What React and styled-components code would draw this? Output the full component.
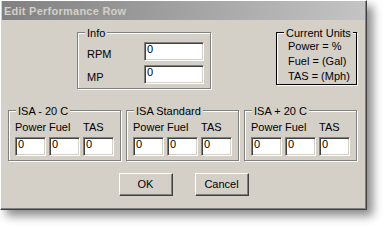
import React from 'react';
import styled, { createGlobalStyle } from 'styled-components';

const Global = createGlobalStyle`
  html, body { margin: 0; padding: 0; background: #ffffff; }
  #root { width: 384px; height: 226px; }
`;

const Window = styled.div`
  width: 367px;
  height: 210px;
  box-sizing: border-box;
  display: flex;
  flex-direction: column;
  background: #d4d0c8;
  border: 1px solid;
  border-color: #ffffff #404040 #404040 #ffffff;
  padding: 0 1px 1px 1px;
  box-shadow: inset -1px -1px 0 #808080, 6px 6px 9px rgba(0, 0, 0, 0.45);
  font-family: "Liberation Sans", Arial, sans-serif;
  font-size: 11px;
  color: #000;
`;

const TitleBar = styled.div`
  height: 19px;
  box-sizing: border-box;
  padding: 1px 0 0 2px;
  line-height: 18px;
  background: linear-gradient(to right, #808080, #c4c4c4);
  color: #d4d0c8;
  font-weight: bold;
  letter-spacing: 0.25px;
  white-space: nowrap;
`;

const Body = styled.div`
  flex: 1;
  display: flex;
  flex-direction: column;
  padding-top: 5px;
`;

const TopRow = styled.div`
  display: flex;
  align-items: flex-start;
  gap: 65px;
  padding-left: 75px;
`;

const Group = styled.fieldset`
  margin: 0;
  padding: 0;
  min-width: 0;
  box-sizing: border-box;
  width: ${(p) => p.$w}px;
  border: 1px solid ${(p) => (p.$dark ? '#000000' : '#808080')};
  box-shadow: 1px 1px 0 #ffffff, inset 1px 1px 0 #ffffff;
`;

const Legend = styled.legend`
  margin-left: 7px;
  padding: 2px 2px 0;
  line-height: 12px;
  background: #d4d0c8;
`;

const InfoGrid = styled.div`
  display: grid;
  grid-template-columns: 1fr 60px;
  row-gap: 4px;
  padding: 3px 6px 4px 9px;
`;

const FieldLabel = styled.span`
  padding-top: 6px;
  line-height: 13px;
`;

const EditBox = styled.input`
  width: ${(p) => p.$w}px;
  height: 19px;
  box-sizing: border-box;
  margin: 0;
  padding: 0 0 6px 2px;
  line-height: 11px;
  font-family: inherit;
  font-size: 11px;
  color: #000;
  background: #ffffff;
  border: 1px solid;
  border-color: #808080 #ffffff #ffffff #808080;
  box-shadow: inset 1px 1px 0 #404040, inset -1px -1px 0 #d4d0c8;
  outline: none;
  border-radius: 0;
`;

const UnitLines = styled.div`
  padding: 0 0 0 11px;
  line-height: 15px;
`;

const IsaRow = styled.div`
  display: flex;
  gap: 5px;
  margin-top: 14px;
  padding-left: 6px;
`;

const IsaGrid = styled.div`
  display: grid;
  grid-template-columns: repeat(3, 31px);
  column-gap: 3px;
  row-gap: 3px;
  padding: 4px 6px 4px 6px;
`;

const ColLabel = styled.span`
  line-height: 13px;
  white-space: nowrap;
`;

const ButtonRow = styled.div`
  display: flex;
  justify-content: center;
  gap: 22px;
  margin-top: 12px;
`;

const Button = styled.button`
  width: 54px;
  height: 23px;
  box-sizing: border-box;
  margin: 0;
  padding: 0;
  background: #d4d0c8;
  border: 1px solid;
  border-color: #ffffff #404040 #404040 #ffffff;
  box-shadow: inset -1px -1px 0 #808080;
  font-family: inherit;
  font-size: 11px;
  color: #000;
  line-height: 13px;
  border-radius: 0;
`;

const isaGroups = ['ISA - 20 C', 'ISA Standard', 'ISA + 20 C'];
const columns = ['Power', 'Fuel', 'TAS'];

export default function App() {
  return (
    <>
      <Global />
      <Window>
        <TitleBar>Edit Performance Row</TitleBar>
        <Body>
          <TopRow>
            <Group $w={134}>
              <Legend>Info</Legend>
              <InfoGrid>
                <FieldLabel>RPM</FieldLabel>
                <EditBox $w={60} defaultValue="0" />
                <FieldLabel>MP</FieldLabel>
                <EditBox $w={60} defaultValue="0" />
              </InfoGrid>
            </Group>
            <Group $w={81} $dark>
              <Legend>Current Units</Legend>
              <UnitLines>
                <div>Power = %</div>
                <div>Fuel = (Gal)</div>
                <div>TAS = (Mph)</div>
              </UnitLines>
            </Group>
          </TopRow>
          <IsaRow>
            {isaGroups.map((g) => (
              <Group key={g} $w={113}>
                <Legend>{g}</Legend>
                <IsaGrid>
                  {columns.map((c) => (
                    <ColLabel key={c}>{c}</ColLabel>
                  ))}
                  {columns.map((c) => (
                    <EditBox key={c} $w={31} defaultValue="0" />
                  ))}
                </IsaGrid>
              </Group>
            ))}
          </IsaRow>
          <ButtonRow>
            <Button>OK</Button>
            <Button>Cancel</Button>
          </ButtonRow>
        </Body>
      </Window>
    </>
  );
}
